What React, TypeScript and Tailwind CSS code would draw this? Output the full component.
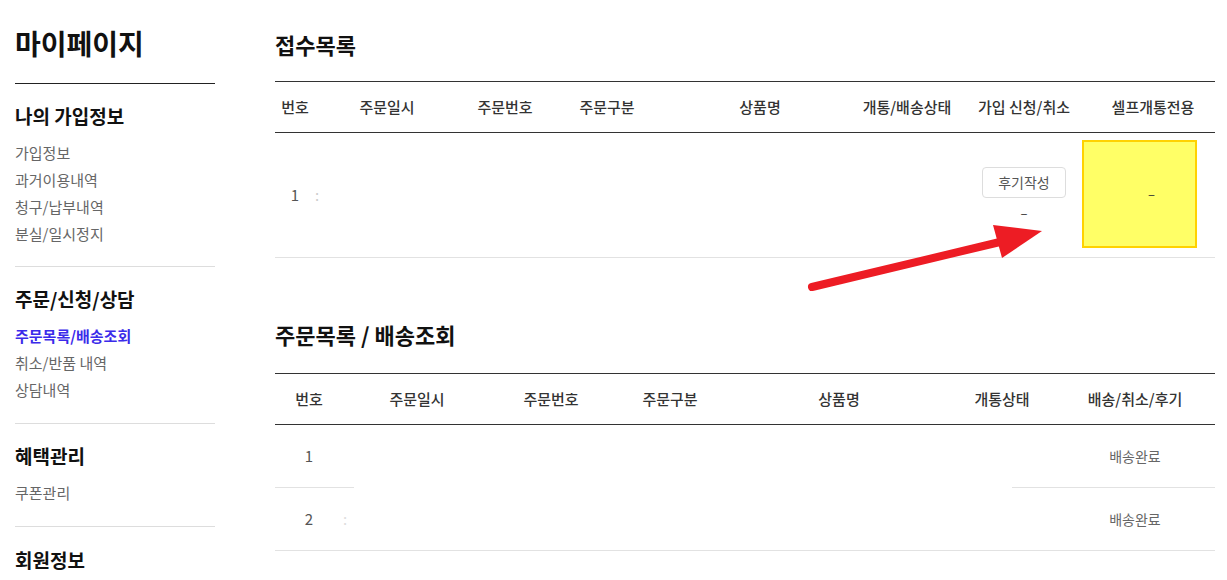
import React from "react";

const font = { fontFamily: '"Noto Sans CJK KR", "Noto Sans", sans-serif' };

const menu = [
  { title: "나의 가입정보", items: ["가입정보", "과거이용내역", "청구/납부내역", "분실/일시정지"] },
  { title: "주문/신청/상담", items: ["주문목록/배송조회", "취소/반품 내역", "상담내역"], active: "주문목록/배송조회" },
  { title: "혜택관리", items: ["쿠폰관리"] },
];

const receiptCols = [
  { label: "번호", w: "w-[40px]" },
  { label: "주문일시", w: "w-[144px]" },
  { label: "주문번호", w: "w-[92px]" },
  { label: "주문구분", w: "w-[112px]" },
  { label: "상품명", w: "w-[194px]" },
  { label: "개통/배송상태", w: "w-[100px]" },
  { label: "가입 신청/취소", w: "w-[134px]" },
  { label: "셀프개통전용", w: "w-[124px]" },
];

const orderCols = [
  { label: "번호", w: "w-[68px]" },
  { label: "주문일시", w: "w-[148px]" },
  { label: "주문번호", w: "w-[120px]" },
  { label: "주문구분", w: "w-[118px]" },
  { label: "상품명", w: "w-[220px]" },
  { label: "개통상태", w: "w-[106px]" },
  { label: "배송/취소/후기", w: "w-[160px]" },
];

function Sidebar() {
  return (
    <aside className="w-[200px] ml-[15px] shrink-0">
      <h1 className="pt-[22px] pb-[19px] text-[28px] font-bold leading-[42px] text-[#111] border-b border-[#222]">
        마이페이지
      </h1>
      {menu.map((sec, i) => (
        <div
          key={sec.title}
          className={i === 0 ? "border-b border-[#ddd] pt-[18px] pb-[19px]" : "border-b border-[#ddd] pt-[18px] pb-[20px]"}
        >
          <h2 className="text-[19px] font-bold leading-[28px] text-[#111] mb-[9px]">{sec.title}</h2>
          <ul>
            {sec.items.map((it) => (
              <li
                key={it}
                className={
                  it === sec.active
                    ? "text-[15px] leading-[27px] font-semibold text-[#3b2bea]"
                    : "text-[15px] leading-[27px] text-[#666]"
                }
              >
                {it}
              </li>
            ))}
          </ul>
        </div>
      ))}
      <div className="pt-[19px]">
        <h2 className="text-[19px] font-bold leading-[28px] text-[#111]">회원정보</h2>
      </div>
    </aside>
  );
}

function HeaderRow({ cols }: { cols: { label: string; w: string }[] }) {
  return (
    <div className="flex h-[52px] items-center border-t border-b border-[#333]">
      {cols.map((c) => (
        <div key={c.label} className={`${c.w} shrink-0 text-center text-[15px] font-medium text-[#333]`}>
          {c.label}
        </div>
      ))}
    </div>
  );
}

export default function App() {
  return (
    <div className="relative flex bg-white w-[1227px] h-[580px] overflow-hidden" style={font}>
      <Sidebar />

      <main className="ml-[60px] w-[940px] shrink-0">
        <h2 className="pt-[28px] text-[22px] font-bold leading-[32px] text-[#111]">접수목록</h2>
        <div className="mt-[21px]">
          <HeaderRow cols={receiptCols} />
          <div className="flex h-[125px] items-center border-b border-[#e2e2e2] text-[15px] text-[#555]">
            <div className="w-[40px] shrink-0 text-center">1</div>
            <div className="w-[144px] shrink-0 text-[#ccc]">:</div>
            <div className="w-[92px] shrink-0" />
            <div className="w-[112px] shrink-0" />
            <div className="w-[194px] shrink-0" />
            <div className="w-[100px] shrink-0" />
            <div className="w-[134px] shrink-0 flex flex-col items-center">
              <button className="h-[31px] w-[84px] rounded-[4px] border border-[#ddd] bg-white text-[14px] text-[#555]">
                후기작성
              </button>
              <span className="mt-[5px] text-[13px] leading-[20px] text-[#333]">–</span>
            </div>
            <div className="relative w-[124px] h-full shrink-0">
              <div className="absolute left-[-9px] top-[7px] w-[115px] h-[108px] bg-[#ffff66] border-2 border-[#ffd200] flex items-center justify-center">
                <span className="ml-[24px] text-[13px] text-[#333]">–</span>
              </div>
            </div>
          </div>
        </div>

        <h2 className="pt-[60px] text-[22px] font-bold leading-[32px] text-[#111]">주문목록 / 배송조회</h2>
        <div className="mt-[23px]">
          <HeaderRow cols={orderCols} />
          {[1, 2].map((n) => (
            <div key={n} className="relative flex h-[63px] items-center border-b border-[#e2e2e2] text-[15px] text-[#555]">
              <div className="w-[68px] shrink-0 text-center">{n}</div>
              <div className="w-[148px] shrink-0 text-[#ddd]">{n === 2 ? ":" : ""}</div>
              <div className="w-[120px] shrink-0" />
              <div className="w-[118px] shrink-0" />
              <div className="w-[220px] shrink-0" />
              <div className="w-[106px] shrink-0" />
              <div className="w-[160px] shrink-0 text-center text-[14px] text-[#666]">배송완료</div>
              {n === 1 && <div className="absolute left-[79px] bottom-[-1px] w-[658px] h-[1px] bg-white" />}
            </div>
          ))}
        </div>
      </main>

      <svg className="absolute left-0 top-0 pointer-events-none" width="1227" height="580">
        <line x1="812" y1="287" x2="1000" y2="242" stroke="#ed1c24" strokeWidth="8" strokeLinecap="round" />
        <polygon points="993,225 1042,231 1002,258" fill="#ed1c24" />
      </svg>
    </div>
  );
}
